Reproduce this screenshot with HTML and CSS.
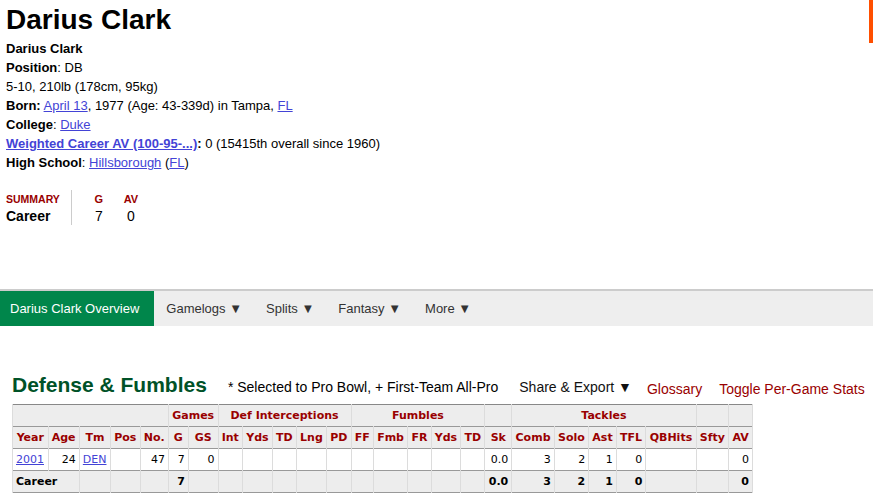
FILE: index.html
```html
<!DOCTYPE html>
<html lang="en">
<head>
<meta charset="utf-8">
<title>Darius Clark</title>
<link rel="stylesheet" href="styles.css">
</head>
<body>
<div class="edge-bar"></div>
<div class="bio">
  <h1 class="name">Darius Clark</h1>
  <div class="info">
    <p><strong>Darius Clark</strong></p>
    <p><strong>Position</strong>: DB</p>
    <p>5-10, 210lb (178cm, 95kg)</p>
    <p><strong>Born:</strong> <a href="#">April 13</a>, 1977 (Age: 43-339d) in Tampa, <a href="#">FL</a></p>
    <p><strong>College</strong>: <a href="#">Duke</a></p>
    <p><strong><a href="#">Weighted Career AV (100-95-...)</a>:</strong> 0 (15415th overall since 1960)</p>
    <p><strong>High School</strong>: <a href="#">Hillsborough</a> (<a href="#">FL</a>)</p>
  </div>
  <div class="summary">
    <div class="sum-label">
      <div class="sum-head">SUMMARY</div>
      <div class="sum-val">Career</div>
    </div>
    <div class="sum-stats">
      <div class="sum-col">
        <div class="sum-head">G</div>
        <div class="sum-num">7</div>
      </div>
      <div class="sum-col">
        <div class="sum-head">AV</div>
        <div class="sum-num">0</div>
      </div>
    </div>
  </div>
</div>

<nav class="subnav">
  <a class="tab active" href="#">Darius Clark Overview</a>
  <a class="tab" href="#">Gamelogs ▼</a>
  <a class="tab" href="#">Splits ▼</a>
  <a class="tab" href="#">Fantasy ▼</a>
  <a class="tab" href="#">More ▼</a>
</nav>

<section class="stats">
  <div class="section-head">
    <h2>Defense &amp; Fumbles</h2>
    <span class="note">* Selected to Pro Bowl, + First-Team All-Pro</span>
    <span class="share">Share &amp; Export ▼</span>
    <a class="tool" href="#">Glossary</a>
    <a class="tool" href="#">Toggle Per-Game Stats</a>
  </div>
  <table class="stats-table">
    <thead>
      <tr class="over">
        <th colspan="5"></th>
        <th colspan="2">Games</th>
        <th colspan="5">Def Interceptions</th>
        <th colspan="5">Fumbles</th>
        <th></th>
        <th colspan="5">Tackles</th>
        <th></th>
        <th></th>
      </tr>
      <tr class="cols">
        <th>Year</th><th>Age</th><th>Tm</th><th>Pos</th><th>No.</th>
        <th>G</th><th>GS</th>
        <th>Int</th><th>Yds</th><th>TD</th><th>Lng</th><th>PD</th>
        <th>FF</th><th>Fmb</th><th>FR</th><th>Yds</th><th>TD</th>
        <th>Sk</th>
        <th>Comb</th><th>Solo</th><th>Ast</th><th>TFL</th><th>QBHits</th>
        <th>Sfty</th><th>AV</th>
      </tr>
    </thead>
    <tbody>
      <tr>
        <td class="l"><a href="#">2001</a></td><td>24</td><td class="l"><a href="#">DEN</a></td><td></td><td>47</td>
        <td>7</td><td>0</td>
        <td></td><td></td><td></td><td></td><td></td>
        <td></td><td></td><td></td><td></td><td></td>
        <td>0.0</td>
        <td>3</td><td>2</td><td>1</td><td>0</td><td></td>
        <td></td><td>0</td>
      </tr>
    </tbody>
    <tfoot>
      <tr>
        <td class="l" colspan="2">Career</td><td></td><td></td><td></td>
        <td>7</td><td></td>
        <td></td><td></td><td></td><td></td><td></td>
        <td></td><td></td><td></td><td></td><td></td>
        <td>0.0</td>
        <td>3</td><td>2</td><td>1</td><td>0</td><td></td>
        <td></td><td>0</td>
      </tr>
    </tfoot>
  </table>
</section>
</body>
</html>
```

FILE: styles.css
```css
html, body {
  margin: 0;
  padding: 0;
  background: #fff;
}

body {
  font-family: "Liberation Sans", Arial, sans-serif;
  font-size: 13px;
  color: #000;
}

a {
  color: #4343d6;
}

.edge-bar {
  position: absolute;
  top: 0;
  right: 0;
  width: 4px;
  height: 43px;
  background: #ff4f00;
}

.bio {
  padding: 0 6px;
}

.name {
  margin: 2px 0 1px;
  font-size: 28px;
  line-height: 36px;
  font-weight: bold;
}

.info p {
  margin: 0;
  line-height: 19px;
}

.summary {
  display: flex;
  margin-top: 18px;
  height: 35px;
}

.sum-label {
  padding-right: 11px;
  border-right: 1px solid #ccc;
}

.sum-head {
  height: 16px;
  line-height: 16px;
  font-size: 10.5px;
  font-weight: bold;
  color: #990000;
  padding-top: 1px;
}

.sum-val,
.sum-num {
  height: 18px;
  line-height: 18px;
  font-size: 14px;
}

.sum-val {
  font-weight: bold;
}

.sum-stats {
  display: flex;
  padding-left: 11px;
}

.sum-col {
  width: 32px;
  text-align: center;
}

.sum-col .sum-head {
  font-size: 11px;
}

.subnav {
  display: flex;
  margin-top: 64px;
  border-top: 2px solid #cccccc;
  background: #eeeeee;
  height: 35px;
}

.tab {
  display: flex;
  align-items: center;
  padding: 0 12px;
  font-size: 13px;
  color: #333;
  text-decoration: none;
  white-space: nowrap;
}

.tab.active {
  background: #00864b;
  color: #fff;
  padding: 0 15px 0 10px;
}

.stats {
  padding: 0 0 0 12px;
  margin-top: 47px;
}

.section-head {
  display: flex;
  align-items: baseline;
  height: 31px;
  white-space: nowrap;
}

.section-head > * {
  flex-shrink: 0;
}

.section-head h2 {
  margin: 0;
  font-size: 21px;
  line-height: 24px;
  color: #005228;
}

.note {
  margin-left: 21px;
  font-size: 14px;
}

.share {
  margin-left: 21px;
  font-size: 14px;
  color: #111;
}

.tool {
  margin-left: 15px;
  font-size: 14px;
  color: #990000;
  text-decoration: none;
  position: relative;
  top: 2px;
}

.tool + .tool {
  margin-left: 17px;
}

.stats-table {
  width: 741px;
  border-collapse: collapse;
  border: 1px solid #888;
  font-family: "DejaVu Sans", Verdana, sans-serif;
  font-size: 11px;
}

.stats-table th,
.stats-table td {
  height: 21px;
  padding: 0 3px;
  line-height: 13px;
  border-left: 1px solid #dcdcdc;
  border-right: 1px solid #dcdcdc;
  white-space: nowrap;
}

.stats-table th {
  background: #ededed;
  color: #990000;
  font-weight: bold;
  text-align: center;
}

.stats-table tr {
  border-bottom: 1px solid #999;
}

.stats-table td {
  text-align: right;
  background: #fff;
}

.stats-table td.l {
  text-align: left;
}

.stats-table tfoot td {
  background: #ededed;
  font-weight: bold;
}
```
